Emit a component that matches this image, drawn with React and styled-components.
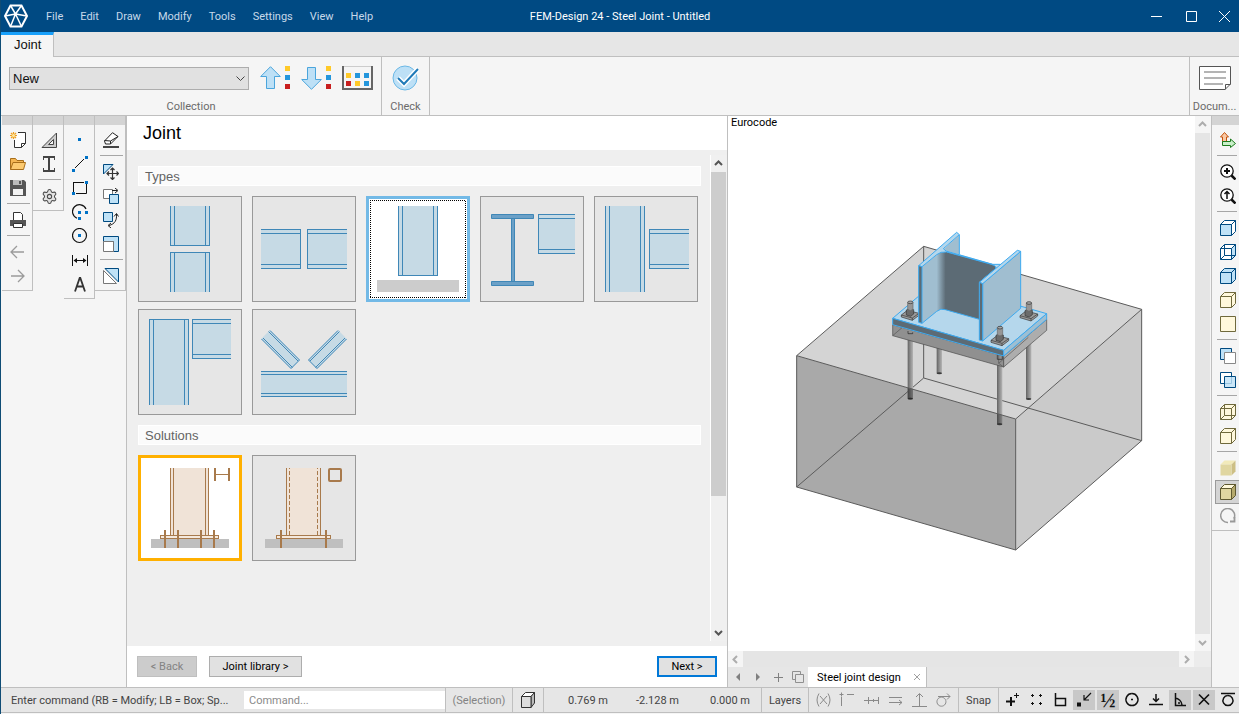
import React, { useState } from 'react'
import styled, { createGlobalStyle } from 'styled-components'
import { Settings } from 'lucide-react'

const GlobalStyle = createGlobalStyle`
  * {
    box-sizing: border-box;
  }
  body {
    margin: 0;
    font-family: Roboto, 'Liberation Sans', sans-serif;
    font-size: 11px;
    color: #1e1e1e;
  }
  button, input, select {
    font: inherit;
    color: inherit;
    margin: 0;
    padding: 0;
    border: 0;
    border-radius: 0;
    background: none;
  }
  svg {
    display: block;
    flex: none;
  }
`

const Window = styled.div`
  display: flex;
  flex-direction: column;
  min-height: 100vh;
  padding-bottom: 1px;
  border-left: 1px solid #0f4c75;
  background: #f5f5f5;
`

// Title bar
const TitleBar = styled.header`
  display: grid;
  grid-template-columns: 1fr auto 1fr;
  align-items: center;
  height: 32px;
  background: #004a83;
  color: #fff;
`
const MenuBar = styled.nav`
  display: flex;
  align-items: center;
  padding-left: 2px;
`
const MenuItem = styled.button`
  height: 32px;
  padding: 0 8px 0 9px;
  color: #c7d9ea;
  &:first-of-type {
    margin-left: 8px;
  }
`
const Title = styled.h1`
  margin: 0;
  font-size: 11px;
  font-weight: 400;
`
const WindowButtons = styled.div`
  display: flex;
  justify-content: flex-end;
`
const WindowButton = styled.button`
  display: grid;
  place-items: center;
  width: 35px;
  height: 32px;
  &:last-child {
    width: 30px;
  }
`

// Ribbon
const TabStrip = styled.div`
  display: flex;
  height: 25px;
  border-bottom: 1px solid #bfbfbf;
  background: #e6e6e6;
`
const RibbonTab = styled.button`
  height: 25px;
  padding: 0 12px 3px 13px;
  border-top: 3px solid #18a0fb;
  border-right: 1px solid #bfbfbf;
  background: #f5f5f5;
  font-family: 'Liberation Sans', sans-serif;
  font-size: 13px;
  color: #111;
`
const Ribbon = styled.div`
  display: flex;
  height: 59px;
  border-bottom: 1px solid #bfbfbf;
`
const RibbonGroup = styled.section`
  display: flex;
  flex-direction: column;
  justify-content: space-between;
  align-items: center;
  padding: ${(props) => (props.$wide ? '8px 8px 0' : '8px 2px 0')};
  width: ${(props) => (props.$wide ? 'auto' : '48px')};
  border-right: 1px solid #bfbfbf;
`
const DocGroup = styled(RibbonGroup)`
  width: 50px;
  margin-left: auto;
  border-right: 0;
  border-left: 1px solid #bfbfbf;
`
const RibbonRow = styled.div`
  display: flex;
  align-items: center;
  gap: 11px;
  height: 26px;
`
const GroupLabel = styled.span`
  height: 16px;
  line-height: 16px;
  color: #6a6a6a;
  white-space: nowrap;
`
const IconButton = styled.button`
  display: block;
`
const SelectBox = styled.label`
  position: relative;
  width: 240px;
`
const Select = styled.select`
  display: block;
  width: 100%;
  height: 23px;
  padding: 0 3px;
  border: 1px solid #adadad;
  background: #e1e1e1;
  appearance: none;
  font-family: 'Liberation Sans', sans-serif;
  font-size: 13px;
  color: #111;
`
const SelectArrow = styled.svg`
  position: absolute;
  right: 4px;
  top: 9px;
  pointer-events: none;
`

// Work area
const Main = styled.main`
  display: flex;
  flex: 1;
  min-height: 0;
`
const ToolArea = styled.aside`
  display: flex;
  align-items: flex-start;
  padding-left: 1px;
  flex: none;
`
const ToolColumn = styled.div`
  width: 31px;
  padding-bottom: 2px;
  border-right: 1px solid #bfbfbf;
  border-bottom: 1px solid #bfbfbf;
`
const ViewTools = styled.aside`
  width: 27px;
  flex: none;
  overflow: hidden;
`
const ViewColumn = styled.div`
  padding-bottom: 2px;
  border-bottom: 1px solid #bfbfbf;
`
const ToolHandle = styled.div`
  height: 9px;
  margin-bottom: 3px;
  background: #d4d4d4;
`
const ToolSeparator = styled.hr`
  height: 2px;
  margin: 3px 2px 3px 5px;
  border: 0;
  background: #a6a6a6;
  border-bottom: 1px solid #f5f5f5;
`
const ToolButton = styled.button`
  display: block;
  width: ${(props) => (props.$active ? 'calc(100% - 3px)' : '100%')};
  height: 24px;
  margin-left: ${(props) => (props.$active ? '3px' : '0')};
  padding: ${(props) => (props.$active ? '3px 0 3px 4px' : '4px 0 4px 8px')};
  border: ${(props) => (props.$active ? '1px solid #9a9a9a' : '0')};
  background: ${(props) => (props.$active ? '#d4d4d4' : 'none')};
  border-right: 0;
`

// Wizard panel
const Panel = styled.section`
  display: flex;
  flex-direction: column;
  width: 602px;
  flex: none;
  border-left: 1px solid #bfbfbf;
  border-right: 1px solid #bfbfbf;
  background: #efefef;
`
const PanelHeader = styled.h2`
  height: 34px;
  margin: 0;
  padding-left: 16px;
  background: #fff;
  font-family: 'Liberation Sans', sans-serif;
  font-size: 18px;
  font-weight: 400;
  line-height: 35px;
  color: #000;
`
const PanelBody = styled.div`
  display: flex;
  flex: 1;
  padding: 5px 0 5px 11px;
`
const PanelContent = styled.div`
  flex: 1;
  padding: 11px 9px 0 0;
`
const SectionTitle = styled.h3`
  height: 20px;
  margin: 0 0 10px;
  padding-left: 6px;
  border: 1px solid #fff;
  background: #fbfbfb;
  font-family: 'Liberation Sans', sans-serif;
  font-size: 13px;
  font-weight: 400;
  line-height: 19px;
  color: #646464;
`
const TileGrid = styled.div`
  display: grid;
  grid-template-columns: repeat(5, 104px);
  gap: 7px 10px;
  margin-bottom: 10px;
`
const Tile = styled.button`
  width: 104px;
  height: 106px;
  border: ${(props) =>
    props.$accent ? `3px solid ${props.$accent}` : '1px solid #999'};
  background: ${(props) => (props.$accent ? '#fff' : '#e6e6e6')};
`
const PanelFooter = styled.footer`
  display: flex;
  align-items: center;
  gap: 12px;
  height: 41px;
  padding: 0 10px;
  background: #fff;
`
const WizardButton = styled.button`
  width: ${(props) => (props.$wide ? 93 : 60)}px;
  height: 21px;
  border: ${(props) => (props.$primary ? '2px solid #0078d7' : '1px solid #adadad')};
  background: #e1e1e1;
  color: #000;
  &:last-child {
    margin-left: auto;
  }
  &:disabled {
    border-color: #bfbfbf;
    background: #ccc;
    color: #838383;
  }
`

// Scroll bars
const VScroll = styled.div`
  display: flex;
  flex-direction: column;
  width: 17px;
  padding-right: 1px;
  border-left: 1px solid #fff;
  background: ${(props) => (props.$light ? '#f5f5f5' : '#f0f0f0')};
`
const HScroll = styled.div`
  display: flex;
  height: 16px;
  background: #f5f5f5;
`
const ScrollArrow = styled.button`
  display: grid;
  place-items: center;
  width: 15px;
  height: 17px;
  flex: none;
`
const Thumb = styled.div`
  flex: ${(props) => (props.$part ? `0 1 ${props.$part}` : 1)};
  background: ${(props) => (props.$part ? '#cdcdcd' : '#e5e5e5')};
`
const Spacer = styled.div`
  flex: 1;
`

// Model view
const ViewArea = styled.section`
  display: flex;
  flex-direction: column;
  flex: 1;
  min-width: 0;
  border-right: 1px solid #bfbfbf;
`
const ViewRow = styled.div`
  display: flex;
  flex: 1;
`
const Canvas = styled.div`
  flex: 1;
  display: flex;
  flex-direction: column;
  background: #fff;
`
const CanvasLabel = styled.p`
  margin: 0;
  padding: 0 3px;
  height: 14px;
  line-height: 13px;
  color: #000;
`
const Model = styled.div`
  display: flex;
  flex: 1;
  align-items: center;
  justify-content: center;
  padding: 0 0 2px 18px;
`
const ScrollCorner = styled.div`
  width: 17px;
  background: #ececec;
`
const ViewTabs = styled.div`
  display: flex;
  height: 20px;
  background: #e6e6e6;
`
const TabArrow = styled.button`
  display: grid;
  place-items: center;
  width: 20px;
  height: 20px;
`
const ViewTab = styled.div`
  display: flex;
  align-items: center;
  justify-content: space-between;
  width: 119px;
  padding: 0 5px 0 9px;
  border-right: 1px solid #bfbfbf;
  background: #fff;
  color: #000;
`

// Status bar
const StatusBar = styled.footer`
  display: flex;
  align-items: center;
  height: 26px;
  overflow: hidden;
  border-top: 1px solid #bfbfbf;
  border-bottom: 1px solid #bfbfbf;
  background: #e6e6e6;
  color: #444;
`
const CommandLabel = styled.label`
  width: 243px;
  padding: 0 10px;
  overflow: hidden;
  white-space: nowrap;
  text-overflow: ellipsis;
`
const CommandInput = styled.input`
  flex: 1;
  min-width: 60px;
  height: 18px;
  padding: 0 5px;
  background: #fff;
  &::placeholder {
    color: #8a8a8a;
    opacity: 1;
  }
`
const StatusCell = styled.div`
  display: flex;
  align-items: center;
  justify-content: center;
  width: ${(props) => props.$width}px;
  height: 24px;
  flex: none;
  border-left: 1px solid #bfbfbf;
  color: ${(props) => (props.$muted ? '#838383' : 'inherit')};
`
const Coordinates = styled.div`
  display: grid;
  grid-template-columns: 64px 71px 71px;
  width: 218px;
  height: 24px;
  flex: none;
  align-items: center;
  border-left: 1px solid #bfbfbf;
  text-align: right;
`
const StatusTools = styled.div`
  display: flex;
  align-items: center;
  gap: ${(props) => (props.$snap ? 2 : 0)}px;
  height: 24px;
  padding: 0 ${(props) => (props.$snap ? 0 : 3)}px 0 2px;
  flex: none;
  border-left: 1px solid #bfbfbf;
`
const StatusButton = styled.button`
  display: grid;
  place-items: center;
  width: ${(props) => (props.$snap ? 22 : 24)}px;
  height: 20px;
  background: ${(props) => (props.$active ? '#c8c8c8' : 'none')};
`
const Half = styled.span`
  font-family: 'Liberation Serif', serif;
  font-size: 20px;
  font-weight: 700;
  line-height: 20px;
  color: #111;
`

const Svg16 = ({ children, size = 16 }) => (
  <svg width={size} height={size} viewBox={`0 0 ${size} ${size}`} fill="none">
    {children}
  </svg>
)

const Chevron = ({ dir = 'down', color = '#555', width = 2 }) => {
  const d = {
    up: 'M1 6L4.500 2.500L8 6',
    down: 'M1 3L4.500 6.500L8 3',
    left: 'M6 1L2.500 4.500L6 8',
    right: 'M3 1L6.500 4.500L3 8',
  }
  return (
    <svg width="9" height="9" fill="none" stroke={color} strokeWidth={width}>
      <path d={d[dir]} />
    </svg>
  )
}

const Logo = () => (
  <svg width="26" height="26" viewBox="0 0 26 26" fill="none" stroke="#fff">
    <path strokeWidth="2" d="M7.500 2.500H18.500L24 13L18.500 23.500H7.500L2 13Z" />
    <path
      strokeWidth="1.500"
      d="M12.500 11L7.500 2.500M12.500 11L18.500 2.500M12.500 11L24 13M12.500 11L18.500 23.500M12.500 11L7.500 23.500M12.500 11L2 13"
    />
  </svg>
)

/* left tools */
const dark = '#333'
const blue = '#0072c6'
const navy = '#004a80'
const pale = '#bfe2f7'

const NewIcon = () => (
  <Svg16>
    <path d="M8.500.500H15.500V11.500L11.500 15.500H4.500V8" fill="#fff" />
    <path d="M8 .500H15.500V11.500L11.500 15.500H4.500V8M15.500 11.500H11.500V15.500" stroke={dark} />
    <path
      d="M3.500 0V7M0 3.500H7M1 1L6 6M6 1L1 6"
      stroke="#f0a020"
      strokeWidth="1.200"
    />
    <circle cx="3.500" cy="3.500" r="1.500" fill="#ffe9a0" />
  </Svg16>
)
const OpenIcon = () => (
  <Svg16>
    <path d="M.500 13.500V2.500H5.500L7 4.500H13.500V6.500" fill="#f4b653" stroke="#a86e1a" />
    <path d="M.500 13.500L3 6.500H15.500L13.500 13.500Z" fill="#fcca70" stroke="#a86e1a" />
  </Svg16>
)
const SaveIcon = () => (
  <Svg16>
    <path d="M0 0H14L16 2V16H0Z" fill="#555" />
    <path d="M3 0H12V5H3Z" fill="#bbb" />
    <path d="M9 1H11V4H9Z" fill="#555" />
    <path d="M3 9H13V15H3Z" fill="#f2f2f2" />
  </Svg16>
)
const PrintIcon = () => (
  <Svg16>
    <path d="M0 8H16V14H0Z" fill="#555" />
    <path d="M3.500 8V.500H10.500L12.500 2.500V8" fill="#fff" stroke={dark} />
    <path d="M3.500 11.500H12.500V15.500H3.500Z" fill="#fff" stroke={dark} />
  </Svg16>
)
const BackIcon = () => (
  <Svg16>
    <path d="M7 2L1 8L7 14M1 8H14" stroke="#9b9b9b" strokeWidth="1.300" />
  </Svg16>
)
const ForwardIcon = () => (
  <Svg16>
    <path d="M8 2L14 8L8 14M1 8H14" stroke="#9b9b9b" strokeWidth="1.300" />
  </Svg16>
)
const TriangleIcon = () => (
  <Svg16>
    <path
      d="M1 15.500H15.500V1ZM7.500 12.500H12.500V7.500Z"
      fill="#ccc"
      fillRule="evenodd"
      stroke="#444"
    />
  </Svg16>
)
const BeamIcon = () => (
  <Svg16>
    <path d="M2 1H14M2 15H14M8 1V15" stroke="#444" strokeWidth="2" />
    <path d="M2.500 1V4M13.500 1V4M2.500 12V15M13.500 12V15" stroke="#444" />
  </Svg16>
)
const GearIcon = () => (
  <Settings size={17} color="#4c4c4c" strokeWidth={1.5} fill="#e2e2e2" />
)
const PointIcon = () => (
  <Svg16>
    <path d="M6 6H9V9H6Z" fill={blue} />
  </Svg16>
)
const LineIcon = () => (
  <Svg16>
    <path d="M3 12L12 3" stroke="#111" />
    <path d="M0 13H3V16H0ZM13 0H16V3H13Z" fill={blue} />
  </Svg16>
)
const RectIcon = () => (
  <Svg16>
    <path d="M1 2.500H12M14.500 4V13.500H4M1.500 2V12" stroke="#111" />
    <path d="M0 12H3V15H0ZM13 1H16V4H13Z" fill={blue} />
  </Svg16>
)
const ArcIcon = () => (
  <Svg16>
    <path d="M14 5A7 7 0 1 0 5 14.200" stroke="#111" strokeWidth="1.200" />
    <path d="M6 7H9V10H6ZM13 7H16V10H13ZM6 13H9V16H6Z" fill={blue} />
  </Svg16>
)
const CircleIcon = () => (
  <Svg16>
    <circle cx="7.500" cy="7.500" r="7" stroke="#111" strokeWidth="1.200" />
    <path d="M6 6H9V9H6Z" fill={blue} />
  </Svg16>
)
const DimensionIcon = () => (
  <Svg16>
    <path d="M.500 3V14M15.500 3V14M2 8.500H14" stroke="#111" />
    <path d="M1.500 8.500L5 6V11ZM14.500 8.500L11 6V11Z" fill="#111" />
  </Svg16>
)
const TextIcon = () => (
  <Svg16>
    <path d="M3 15.500L7.700 2H8.300L13 15.500M5 10.500H11" stroke="#333" strokeWidth="1.800" />
  </Svg16>
)
const EraserIcon = () => (
  <Svg16>
    <path d="M1.500 9L9.500 .700L15 4.500L7.500 12H2.500Z" fill="#fff" stroke="#222" />
    <path d="M1.500 8.500L7.500 9L15 4.500M7.500 9V12" stroke="#222" />
    <path d="M0 14H16V16H0Z" fill="#444" />
  </Svg16>
)
const MoveIcon = () => (
  <Svg16>
    <path d="M.500 .500H10L.500 10Z" fill={pale} stroke={navy} />
    <path
      d="M9.500 4V15.500M4 9.500H15.500"
      stroke="#f5f5f5"
      strokeWidth="3"
    />
    <path
      d="M9.500 4V15.500M4 9.500H15.500M7.500 6L9.500 4L11.500 6M7.500 13.500L9.500 15.500L11.500 13.500M6 7.500L4 9.500L6 11.500M13.500 7.500L15.500 9.500L13.500 11.500"
      stroke="#333"
      strokeWidth="1.200"
    />
  </Svg16>
)
const CopyIcon = () => (
  <Svg16>
    <path d="M.500 1.500H9.500V10.500H.500Z" fill="#fff" stroke="#777" />
    <path d="M6.500 6.500H15.500V15.500H6.500Z" fill={pale} stroke={navy} />
    <path d="M9 2.500H14M12 0L15 2.500L12 5" stroke="#222" />
  </Svg16>
)
const RotateIcon = () => (
  <Svg16>
    <path d="M.500 .500H9.500V9.500H.500Z" fill={pale} stroke={navy} />
    <path d="M13.500 2C14 8 12 12 6 13.500M11 4.500L13.500 1.500L15.500 4.500M8 11L5 13.500L8 16" stroke="#222" />
  </Svg16>
)
const ScaleIcon = () => (
  <Svg16>
    <path d="M.500 .500H15.500V15.500H10.500V5.500H.500Z" fill={pale} stroke={navy} />
    <path d="M.500 5.500H10.500V15.500H.500Z" fill="#fff" stroke="#777" />
  </Svg16>
)
const MirrorIcon = () => (
  <Svg16>
    <path d="M2 .500H15.500V14Z" fill={pale} stroke={navy} />
    <path d="M.500 2.500V15.500H13.500Z" fill="#fff" stroke="#777" />
  </Svg16>
)

const leftTools = [
  [
    ['New', NewIcon],
    ['Open', OpenIcon],
    ['Save', SaveIcon],
    null,
    ['Print', PrintIcon],
    null,
    ['Undo', BackIcon],
    ['Redo', ForwardIcon],
  ],
  [['Working plane', TriangleIcon], ['Section', BeamIcon], null, ['Options', GearIcon]],
  [
    ['Point', PointIcon],
    ['Line', LineIcon],
    ['Rectangle', RectIcon],
    ['Arc', ArcIcon],
    ['Circle', CircleIcon],
    ['Dimension', DimensionIcon],
    ['Text', TextIcon],
  ],
  [
    ['Erase', EraserIcon],
    null,
    ['Move', MoveIcon],
    ['Copy', CopyIcon],
    ['Rotate', RotateIcon],
    ['Scale', ScaleIcon],
    null,
    ['Mirror', MirrorIcon],
  ],
]

/* right tools */
const olive = '#6f693c'
const cream = '#fff8dc'

const AxesIcon = () => (
  <Svg16>
    <path d="M2.500 13V5H.500L4.500.500L8.500 5H6.500V9" fill="#f9c9a5" stroke="#c4520c" />
    <path d="M2.500 9.500H10.500V7L15.500 11.500L10.500 15.500V13.500H2.500Z" fill="#c9efc9" stroke="#1c7a1c" />
  </Svg16>
)
const ZoomIcon = ({ up }) => (
  <Svg16>
    <circle cx="7" cy="7" r="6.200" fill="#fff" stroke="#111" strokeWidth="1.300" />
    <path d="M11.500 11.500L15.500 15.500" stroke="#111" strokeWidth="2.500" />
    <path
      d={up ? 'M7 11V4M4.500 6L7 3.500L9.500 6' : 'M4 7H10M7 4V10'}
      stroke="#111"
      strokeWidth={up ? 1.5 : 2}
    />
  </Svg16>
)
const CubeIcon = ({ line = navy, front = '#fff', top = '#fff', side = '#fff', wire }) => (
  <Svg16>
    <path d="M.500 4.500L4.500.500H15.500L11.500 4.500Z" fill={top} stroke={line} />
    <path d="M11.500 4.500L15.500.500V11.500L11.500 15.500Z" fill={side} stroke={line} />
    <path d="M.500 4.500H11.500V15.500H.500Z" fill={front} stroke={line} />
    {wire && <path d="M4.500 .500V11.500H15.500M4.500 11.500L.500 15.500" stroke={line} />}
  </Svg16>
)
const PlaneIcon = () => (
  <Svg16>
    <path d="M.500 .500H15.500V15.500H.500Z" fill={cream} stroke={olive} />
  </Svg16>
)
const OverlapIcon = ({ clear }) => (
  <Svg16>
    <path d="M.500 .500H11.500V11.500H.500Z" fill={clear ? '#fff' : pale} stroke={navy} />
    <path
      d="M4.500 4.500H15.500V15.500H4.500Z"
      fill={clear ? '#bfe2f7cc' : '#fff'}
      stroke={clear ? navy : '#888'}
    />
  </Svg16>
)
const ReloadIcon = () => (
  <Svg16>
    <path d="M8 14.500A7 7 0 1 1 14 10.500" stroke="#999" strokeWidth="1.500" />
    <path d="M14.500 9V13.500H10" stroke="#999" strokeWidth="1.800" />
  </Svg16>
)

const viewTools = [
  ['Axes', <AxesIcon />],
  null,
  ['Zoom in', <ZoomIcon />],
  ['Previous zoom', <ZoomIcon up />],
  null,
  ['Front view', <CubeIcon front={pale} />],
  ['Side view', <CubeIcon side={pale} wire />],
  ['Solid view', <CubeIcon front={pale} top={pale} side={pale} />],
  ['Isometric view', <CubeIcon line={olive} front={cream} top={cream} side={cream} />],
  ['Plan view', <PlaneIcon />],
  null,
  ['Bring forward', <OverlapIcon />],
  ['Transparent', <OverlapIcon clear />],
  null,
  ['Wireframe', <CubeIcon line={olive} front={cream} top={cream} side={cream} wire />],
  ['Hidden line', <CubeIcon line={olive} front={cream} top={cream} side={cream} />],
  null,
  ['Shaded', <CubeIcon line="none" front="#e0d6a0" top="#f2eaba" side="#cdbf85" />],
  ['Shaded with lines', <CubeIcon line="#5f5930" front="#e0d6a0" top="#fff8dc" side="#b5a96c" />, true],
  ['Reload', <ReloadIcon />],
]

/* joint thumbnails, drawn on the 104 x 106 tile */
const steel = '#3f87b7'
const steelFill = '#c6dae5'

const BeamPart = ({ x, y, w, h, ends = '' }) => (
  <g shapeRendering="crispEdges">
    <rect x={x} y={y} width={w} height={h} fill={steelFill} />
    {[0, 4, h - 5, h - 1].map((dy) => (
      <rect key={dy} x={x} y={y + dy} width={w} height="1" fill={steel} />
    ))}
    {ends.includes('l') && <rect x={x} y={y} width="1" height={h} fill={steel} />}
    {ends.includes('r') && <rect x={x + w - 1} y={y} width="1" height={h} fill={steel} />}
  </g>
)
const ColumnPart = ({ x, y, w, h, ends = '' }) => (
  <g shapeRendering="crispEdges">
    <rect x={x} y={y} width={w} height={h} fill={steelFill} />
    {[0, 4, w - 5, w - 1].map((dx) => (
      <rect key={dx} x={x + dx} y={y} width="1" height={h} fill={steel} />
    ))}
    {ends.includes('t') && <rect x={x} y={y} width={w} height="1" fill={steel} />}
    {ends.includes('b') && <rect x={x} y={y + h - 1} width={w} height="1" fill={steel} />}
  </g>
)

const types = [
  {
    name: 'Column splice',
    art: (
      <>
        <ColumnPart x={32} y={10} w={40} h={40} ends="b" />
        <ColumnPart x={32} y={56} w={40} h={40} ends="t" />
      </>
    ),
  },
  {
    name: 'Beam splice',
    art: (
      <>
        <BeamPart x={9} y={33} w={40} h={40} ends="r" />
        <BeamPart x={55} y={33} w={40} h={40} ends="l" />
      </>
    ),
  },
  {
    name: 'Column base',
    art: (
      <>
        <ColumnPart x={32} y={10} w={40} h={70} ends="b" />
        <rect x="11" y="84" width="82" height="12" fill="#ccc" />
        <path
          d="M4 4.500H100M4 101.500H100M4.500 4V102M99.500 5V102"
          stroke="#000"
          strokeDasharray="1 1"
        />
      </>
    ),
  },
  {
    name: 'Beam to beam',
    art: (
      <>
        <g fill="#6ba0c7" stroke={steel}>
          <path d="M31.500 22V86H34.500V22Z" />
          <path d="M11.500 18.500H53.500V22.500H11.500ZM11.500 85.500H53.500V89.500H11.500Z" />
        </g>
        <BeamPart x={58} y={18} w={37} h={40} ends="l" />
      </>
    ),
  },
  {
    name: 'Beam to column',
    art: (
      <>
        <ColumnPart x={11} y={10} w={40} h={86} />
        <BeamPart x={55} y={33} w={40} h={40} ends="l" />
      </>
    ),
  },
  {
    name: 'Beam to column end',
    art: (
      <>
        <ColumnPart x={11} y={10} w={40} h={86} ends="t" />
        <BeamPart x={54} y={10} w={39} h={40} ends="l" />
      </>
    ),
  },
  {
    name: 'Truss node',
    art: (
      <>
        <g fill={steelFill}>
          <path d="M9 30L18 21L48 51L39 60ZM86 21L95 30L65 60L56 51Z" />
          <path
            d="M9.500 30L39 59.500L47.500 51L18 21.500M11 29L40.500 58.500M16.500 22.500L46 52"
            stroke={steel}
            fill="none"
          />
          <path
            d="M94.500 30L65 59.500L56.500 51L86 21.500M93 29L63.500 58.500M87.500 22.500L58 52"
            stroke={steel}
            fill="none"
          />
        </g>
        <rect x="9" y="62" width="86" height="26" fill={steelFill} />
        <path d="M9 62.500H95M9 65.500H95M9 84.500H95M9 87.500H95" stroke={steel} />
      </>
    ),
  },
]

const BasePlate = ({ x, w, bolts }) => (
  <>
    <rect x="13" y="84" width="78" height="9" fill="#bfbfbf" />
    <rect x={x + 0.5} y="80.500" width={w - 1} height="3" fill="#f5e9dd" stroke="#a87a4c" />
    {bolts.map((bx) => (
      <rect key={bx} x={bx} y="75" width="2" height="18" fill="#a87a4c" />
    ))}
  </>
)

const solutions = [
  {
    name: 'I section base plate',
    art: (
      <>
        <rect x="32" y="13" width="39" height="67" fill="#f0e3d7" />
        <path d="M32.500 13V80M35.500 13V80M67.500 13V80M70.500 13V80" stroke="#a87a4c" />
        <BasePlate x={22} w={59} bolts={[26, 39, 62, 75]} />
        <path d="M77 13V26M91 13V26" stroke="#a87a4c" strokeWidth="2" />
        <path d="M78 19.500H90" stroke="#a87a4c" />
      </>
    ),
  },
  {
    name: 'Hollow section base plate',
    art: (
      <>
        <rect x="34" y="13" width="35" height="67" fill="#f0e3d7" />
        <path d="M34.500 13V80M68.500 13V80" stroke="#a87a4c" />
        <path d="M37.500 13V80M65.500 13V80" stroke="#a87a4c" strokeDasharray="4 2" strokeDashoffset="3" />
        <BasePlate x={24} w={55} bolts={[28, 73]} />
        <rect x="77" y="14" width="12" height="12" rx="1" fill="none" stroke="#a87a4c" strokeWidth="2" />
      </>
    ),
  },
]

const TileButton = ({ item, accent, onClick }) => {
  const inset = accent ? 3 : 1
  const w = 104 - inset * 2
  const h = 106 - inset * 2
  return (
    <Tile $accent={accent} aria-label={item.name} onClick={onClick}>
      <svg width={w} height={h} viewBox={`${inset} ${inset} ${w} ${h}`}>
        {item.art}
      </svg>
    </Tile>
  )
}

/* 3D model, three units per pixel */
const Rod = ({ x, top, bottom }) => (
  <g>
    <rect x={x - 8} y={top} width="16" height={bottom - top} fill="url(#rod)" />
    <ellipse cx={x} cy={bottom} rx="8" ry="3" fill="#3a3a3a" />
  </g>
)
const Nut = ({ x, y }) => (
  <g stroke="#333" strokeWidth="2">
    <path
      d={`M${x - 27} ${y}L${x - 9} ${y - 14}L${x + 26} ${y - 5}V${y + 1}L${x + 6} ${y + 16}L${x - 27} ${y + 6}Z`}
      fill="#9a9a9a"
    />
    <path d={`M${x - 27} ${y}L${x + 6} ${y + 9}L${x + 26} ${y - 5}M${x + 6} ${y + 9}V${y + 16}`} fill="none" />
    <path
      d={`M${x - 12} ${y - 15}L${x - 3} ${y - 20}L${x + 10} ${y - 16}V${y - 3}L${x + 1} ${y + 4}L${x - 12} ${y}Z`}
      fill="#6b6b6b"
    />
    <path
      d={`M${x - 8} ${y - 37}H${x + 8}V${y - 17}L${x} ${y - 13}L${x - 8} ${y - 17}Z`}
      fill="#969696"
      stroke="#666"
    />
    <ellipse cx={x} cy={y - 38} rx="8" ry="4" fill="#a5a5a5" />
  </g>
)
const JointModel = () => (
  <svg width="380" height="340" viewBox="0 0 1140 1020" fill="none" strokeLinejoin="round">
    <defs>
      <linearGradient id="rod">
        <stop offset="0" stopColor="#626262" />
        <stop offset=".450" stopColor="#8a8a8a" />
        <stop offset="1" stopColor="#b4b4b4" />
      </linearGradient>
      <linearGradient id="fillet">
        <stop offset="0" stopColor="#a0bed0" />
        <stop offset="1" stopColor="#5c6b75" />
      </linearGradient>
    </defs>
    <path d="M431 79L1085 268L707 597L50 407Z" fill="#d4d4d4" />
    <path d="M50 407L707 597V990L50 801Z" fill="#a9a9a9" />
    <path d="M707 597L1085 268V662L707 990Z" fill="#cacaca" />
    <g stroke="#5b5b5b" strokeWidth="3">
      <path d="M431 79V474L50 801M431 474L1085 662" />
    </g>
    <Rod x={478} top={340} bottom={460} />
    <Rod x={391} top={330} bottom={536} />
    <Rod x={746} top={330} bottom={537} />
    <Rod x={659} top={400} bottom={613} />
    <path d="M383 503L399 507V536H383Z" fill="#000" opacity=".350" />
    <path d="M651 581L667 585V613H651Z" fill="#000" opacity=".250" />
    <path
      d="M431 79L1085 268L707 597L50 407ZM50 407V801L707 990L1085 662V268M707 597V990"
      stroke="#5b5b5b"
      strokeWidth="3"
    />
    <path d="M338 314V347L671 441V408Z" fill="#909090" stroke="#4a4a4a" strokeWidth="2" />
    <path d="M671 408V441L800 331V298Z" fill="#adadad" stroke="#4a4a4a" strokeWidth="2" />
    <path d="M338 347L372 318M656 402V430L671 441M656 430L745 352" stroke="#555" strokeWidth="2" />
    <path d="M384 333V341H398V337M652 405V418H667V408M740 350V343M754 338V330" stroke="#222" strokeWidth="2" />
    <g stroke="#3daaf0" strokeWidth="3">
      <path d="M338 295L467 185L800 281L671 391Z" fill="#b5d7ec" />
      <path d="M338 295V314L671 408V391Z" fill="#5c6b75" />
      <path d="M671 391V408L800 298V281Z" fill="#9dbfd3" />
    </g>
    <Nut x={391} y={285} />
    <Nut x={747} y={287} />
    {/* far half of the left flange */}
    <path d="M480 97L538 44V150H480Z" fill="#a0bed0" />
    <path d="M538 44V104" stroke="#3daaf0" strokeWidth="3" />
    {/* web */}
    <path d="M480 97L497 95L640 133L652 145L598 190V298L490 268L480 266Z" fill="#5c6b75" />
    <path d="M426 140L480 97V267L426 310Z" fill="#a0bed0" />
    <path d="M470 103L482 97L497 95V270L484 267L470 274Z" fill="url(#fillet)" />
    <path
      d="M426 140L470 104Q482 94 500 96L634 133Q656 140 642 150L608 182L598 187L712 91L662 133L640 132L500 92L490 85L538 44L530 37L416 137Z"
      fill="#b5d7ec"
    />
    <path
      d="M426 140L470 104Q482 94 500 96L634 133Q656 140 642 150L598 187M662 133H638L498 93L490 86L538 44L530 37L416 137L426 140"
      stroke="#3daaf0"
      strokeWidth="3"
    />
    <path d="M426 310L470 274Q482 264 496 269L598 298" stroke="#3daaf0" strokeWidth="3" />
    <g stroke="#3daaf0" strokeWidth="3">
      <path d="M416 137L426 140V310L416 307Z" fill="#5c6b75" />
      <path d="M608 191L722 94V265L608 363Z" fill="#a0bed0" />
      <path d="M598 187L712 91L722 94L608 191Z" fill="#b5d7ec" />
      <path d="M598 187L608 191V363L598 360Z" fill="#5c6b75" />
    </g>
    <Nut x={660} y={361} />
  </svg>
)

/* status bar icons */
const editTools = [
  ['Exclude', 'M4 1.500Q0 8 4 14.500M13 1.500Q17 8 13 14.500M5 4L12 12M12 4L5 12'],
  ['Corner', 'M2.500 5V14M.500 2.500H4.500M2.500.500V4.500M8 2.500H15'],
  ['Midpoint', 'M1 8.500H16M5.500 5V12M15.500 5V12M10.500 7V10'],
  ['Offset', 'M2 5.500H15M2 10.500H15M12 8L15 10.500L12 13'],
  ['Perpendicular', 'M1 14.500H16M8.500 14V2M5 5L8.500 1.500L12 5'],
  ['Tangent', 'M6.500 5.200A4.500 4.500 0 1 1 6.400 5.200M3 4.500H15M12 1.500L15 4.500L12 7.500'],
]
const snapTools = [
  ['Point', 'M7 5V14M2 9.500H11', 2, false, 'M12.500 1V6M10 3.500H15'],
  ['Grid', 'M3 3.500H6M11 3.500H14M3 11.500H6M11 11.500H14M4.500 2V5M12.500 2V5M4.500 10V13M12.500 10V13', 1],
  ['Endpoint', 'M3.500 1V13.500H13.500V6.500H3.500', 1.5],
  ['Line end', 'M8 8L15 1M8 3V8H13', 1.2, true, 'M1 12.500H5'],
  ['Midpoint', null, 0, true],
  ['Center', 'M8 1.500A6 6 0 1 1 7.900 1.500M7 7.500H9', 1.5],
  ['Nearest', 'M1 12.500H15M8 2V9M5 6.500L8 9.500L11 6.500', 1.5],
  ['Angle', 'M3.500 1V13.500H14M3 6A8 8 0 0 1 10 13M6 11H8', 1.5, true],
  ['Intersection', 'M3 2.500L13 12.500M13 2.500L3 12.500', 1.7, true],
  ['Tangent', 'M1 1.500H15M8 3.500A5 5 0 1 1 7.900 3.500', 1.5],
]

const App = () => {
  const [type, setType] = useState(2)
  const [solution, setSolution] = useState(0)

  return (
    <>
      <GlobalStyle />
      <Window>
        <TitleBar>
          <MenuBar>
            <Logo />
            {['File', 'Edit', 'Draw', 'Modify', 'Tools', 'Settings', 'View', 'Help'].map(
              (item) => (
                <MenuItem key={item}>{item}</MenuItem>
              )
            )}
          </MenuBar>
          <Title>FEM-Design 24 - Steel Joint - Untitled</Title>
          <WindowButtons>
            <WindowButton aria-label="Minimize">
              <svg width="11" height="11" stroke="#fff">
                <path d="M0 5.500H11" />
              </svg>
            </WindowButton>
            <WindowButton aria-label="Maximize">
              <svg width="11" height="11" stroke="#fff" fill="none">
                <path d="M.500 .500H10.500V10.500H.500Z" />
              </svg>
            </WindowButton>
            <WindowButton aria-label="Close">
              <svg width="11" height="11" stroke="#fff">
                <path d="M0 0L11 11M11 0L0 11" />
              </svg>
            </WindowButton>
          </WindowButtons>
        </TitleBar>

        <TabStrip>
          <RibbonTab>Joint</RibbonTab>
        </TabStrip>
        <Ribbon>
          <RibbonGroup $wide>
            <RibbonRow>
              <SelectBox>
                <Select aria-label="Collection">
                  <option>New</option>
                </Select>
                <SelectArrow width="9" height="6" fill="none" stroke="#444">
                  <path d="M.500 .500L4.500 4.500L8.500 .500" />
                </SelectArrow>
              </SelectBox>
              <IconButton aria-label="Load">
                <svg width="30" height="24">
                  <path
                    d="M10.500.700L20.300 10.500H14.500V22.500H6.500V10.500H.700Z"
                    fill="#bde0f6"
                    stroke="#4ba5dc"
                  />
                  <path d="M25 0H30V5H25Z" fill="#ffc928" />
                  <path d="M25 9H30V14H25Z" fill="#2496dc" />
                  <path d="M25 18H30V23H25Z" fill="#c81e1e" />
                </svg>
              </IconButton>
              <IconButton aria-label="Store">
                <svg width="30" height="24">
                  <path
                    d="M10.500 23.300L20.300 13.500H14.500V1.500H6.500V13.500H.700Z"
                    fill="#bde0f6"
                    stroke="#4ba5dc"
                  />
                  <path d="M25 0H30V5H25Z" fill="#ffc928" />
                  <path d="M25 9H30V14H25Z" fill="#2496dc" />
                  <path d="M25 18H30V23H25Z" fill="#c81e1e" />
                </svg>
              </IconButton>
              <IconButton aria-label="Manage">
                <svg width="31" height="24">
                  <path d="M0 0H31V24H0Z" fill="#666" />
                  <path d="M2 1H29V22H2Z" fill="#f5f5f5" />
                  <path d="M2 0H29V1H2Z" fill="#ccc" />
                  <path d="M4 7H9V12H4ZM13 15H18V20H13Z" fill="#ffc928" />
                  <path d="M13 7H18V12H13ZM22 7H27V12H22ZM22 15H27V20H22Z" fill="#2496dc" />
                  <path d="M4 15H9V20H4Z" fill="#c81e1e" />
                </svg>
              </IconButton>
            </RibbonRow>
            <GroupLabel>Collection</GroupLabel>
          </RibbonGroup>
          <RibbonGroup>
            <RibbonRow>
              <IconButton aria-label="Check">
                <svg width="27" height="26" fill="none">
                  <circle cx="13" cy="13" r="12" fill="#bde0f6" stroke="#6bb8e6" />
                  <path d="M6 13L12 19L26 4" stroke="#fff" strokeWidth="5" />
                  <path d="M6 13L12 19L26 4" stroke="#1f7ab8" strokeWidth="2" />
                </svg>
              </IconButton>
            </RibbonRow>
            <GroupLabel>Check</GroupLabel>
          </RibbonGroup>
          <DocGroup>
            <RibbonRow>
              <IconButton aria-label="Documentation">
                <svg width="32" height="24" fill="none">
                  <path d="M.500 .500H31.500V18L26 23.500H.500Z" fill="#fff" stroke="#555" />
                  <path d="M31.500 18.500H26.500V23.500" stroke="#555" />
                  <path d="M5 6H27M5 12H27M5 18H24" stroke="#b4b4b4" strokeWidth="2" />
                </svg>
              </IconButton>
            </RibbonRow>
            <GroupLabel>Docum...</GroupLabel>
          </DocGroup>
        </Ribbon>

        <Main>
          <ToolArea>
            {leftTools.map((tools, i) => (
              <ToolColumn key={i}>
                <ToolHandle />
                {tools.map((tool, j) => {
                  if (!tool) return <ToolSeparator key={j} />
                  const [name, Icon] = tool
                  return (
                    <ToolButton key={j} aria-label={name}>
                      <Icon />
                    </ToolButton>
                  )
                })}
              </ToolColumn>
            ))}
          </ToolArea>

          <Panel>
            <PanelHeader>Joint</PanelHeader>
            <PanelBody>
              <PanelContent>
                <SectionTitle>Types</SectionTitle>
                <TileGrid>
                  {types.map((item, i) => (
                    <TileButton
                      key={item.name}
                      item={item}
                      accent={i === type ? '#72b9e6' : null}
                      onClick={() => setType(i)}
                    />
                  ))}
                </TileGrid>
                <SectionTitle>Solutions</SectionTitle>
                <TileGrid>
                  {solutions.map((item, i) => (
                    <TileButton
                      key={item.name}
                      item={item}
                      accent={i === solution ? '#ffb000' : null}
                      onClick={() => setSolution(i)}
                    />
                  ))}
                </TileGrid>
              </PanelContent>
              <VScroll>
                <ScrollArrow aria-label="Scroll up">
                  <Chevron dir="up" />
                </ScrollArrow>
                <Thumb $part="324px" />
                <Spacer />
                <ScrollArrow aria-label="Scroll down">
                  <Chevron />
                </ScrollArrow>
              </VScroll>
            </PanelBody>
            <PanelFooter>
              <WizardButton disabled>&lt; Back</WizardButton>
              <WizardButton $wide>Joint library &gt;</WizardButton>
              <WizardButton $primary>Next &gt;</WizardButton>
            </PanelFooter>
          </Panel>

          <ViewArea>
            <ViewRow>
              <Canvas>
                <CanvasLabel>Eurocode</CanvasLabel>
                <Model>
                  <JointModel />
                </Model>
              </Canvas>
              <VScroll $light>
                <ScrollArrow aria-label="Scroll up">
                  <Chevron dir="up" color="#adadad" />
                </ScrollArrow>
                <Thumb />
                <ScrollArrow aria-label="Scroll down">
                  <Chevron color="#adadad" />
                </ScrollArrow>
              </VScroll>
            </ViewRow>
            <HScroll>
              <ScrollArrow aria-label="Scroll left">
                <Chevron dir="left" color="#adadad" />
              </ScrollArrow>
              <Thumb />
              <ScrollArrow aria-label="Scroll right">
                <Chevron dir="right" color="#adadad" />
              </ScrollArrow>
              <ScrollCorner />
            </HScroll>
            <ViewTabs>
              <TabArrow aria-label="Previous tab">
                <svg width="8" height="8" fill="#808080">
                  <path d="M6 0V8L2 4Z" />
                </svg>
              </TabArrow>
              <TabArrow aria-label="Next tab">
                <svg width="8" height="8" fill="#808080">
                  <path d="M2 0V8L6 4Z" />
                </svg>
              </TabArrow>
              <TabArrow aria-label="Add tab">
                <svg width="9" height="9" stroke="#808080">
                  <path d="M4.500 0V9M0 4.500H9" />
                </svg>
              </TabArrow>
              <TabArrow aria-label="Duplicate tab">
                <svg width="12" height="12" stroke="#909090" fill="none">
                  <path d="M.500 8.500V.500H8.500M3.500 3.500H11.500V11.500H3.500ZM.500 8.500H3M8.500.500V3" />
                </svg>
              </TabArrow>
              <ViewTab>
                Steel joint design
                <IconButton aria-label="Close tab">
                  <svg width="8" height="8" stroke="#a0a0a0">
                    <path d="M1 1L7 7M7 1L1 7" />
                  </svg>
                </IconButton>
              </ViewTab>
            </ViewTabs>
          </ViewArea>

          <ViewTools>
            <ViewColumn>
              <ToolHandle />
              {viewTools.map((tool, i) => {
                if (!tool) return <ToolSeparator key={i} />
                const [name, icon, active] = tool
                return (
                  <ToolButton key={i} $active={active} aria-label={name}>
                    {icon}
                  </ToolButton>
                )
              })}
            </ViewColumn>
          </ViewTools>
        </Main>

        <StatusBar>
          <CommandLabel htmlFor="command">
            Enter command (RB = Modify; LB = Box; Sp...
          </CommandLabel>
          <CommandInput id="command" placeholder="Command..." />
          <StatusCell $width={67} $muted>
            (Selection)
          </StatusCell>
          <StatusCell $width={31}>
            <Svg16>
              <path d="M1.500 4.500L5.500.500H14.500L11 4.500Z" fill="#fff" stroke="#333" />
              <path d="M11 4.500L14.500.500V11L11 15.500Z" fill="#bbb" stroke="#333" />
              <path d="M1.500 4.500H11V15.500H1.500Z" fill="#ddd" stroke="#333" />
            </Svg16>
          </StatusCell>
          <Coordinates>
            <span>0.769 m</span>
            <span>-2.128 m</span>
            <span>0.000 m</span>
          </Coordinates>
          <StatusCell $width={47}>Layers</StatusCell>
          <StatusTools>
            {editTools.map(([name, d]) => (
              <StatusButton key={name} aria-label={name}>
                <svg width="17" height="16" fill="none" stroke="#8a8a8a">
                  <path d={d} />
                </svg>
              </StatusButton>
            ))}
          </StatusTools>
          <StatusCell $width={40}>Snap</StatusCell>
          <StatusTools $snap>
            {snapTools.map(([name, d, width, active, extra]) => (
              <StatusButton key={name} $snap $active={active} aria-label={name}>
                {d ? (
                  <Svg16>
                    <path d={d} stroke="#111" strokeWidth={width} />
                    {extra && (
                      <path d={extra} stroke="#111" strokeWidth={active ? 4 : 1} />
                    )}
                  </Svg16>
                ) : (
                  <Half>½</Half>
                )}
              </StatusButton>
            ))}
          </StatusTools>
        </StatusBar>
      </Window>
    </>
  )
}

export default App
